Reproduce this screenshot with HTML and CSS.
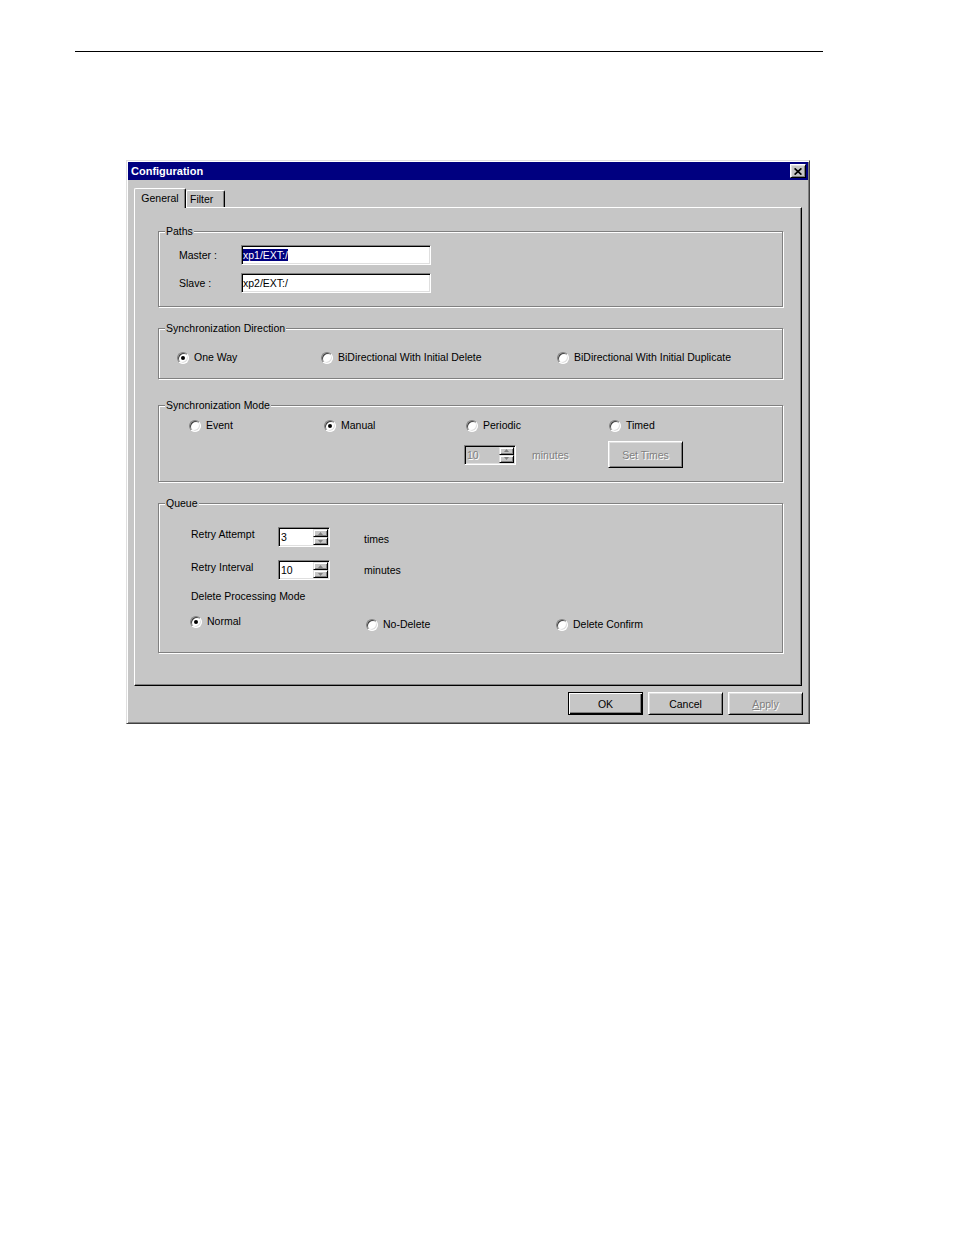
FILE: index.html
```html
<!DOCTYPE html>
<html>
<head>
<meta charset="utf-8">
<title>Configuration</title>
<link rel="stylesheet" href="styles.css">
</head>
<body>
<div class="page">
  <div class="rule"></div>
  <div class="dialog">
    <div class="titlebar">
      <span class="title">Configuration</span>
      <span class="close"><svg width="8" height="7" viewBox="0 0 8 7"><path d="M0.6 0.4 L7.4 6.6 M7.4 0.4 L0.6 6.6" stroke="#000" stroke-width="1.7" fill="none"/></svg></span>
    </div>
    <div class="tabs">
      <div class="tab tab-active">General</div>
      <div class="tab tab-filter">Filter</div>
    </div>
    <div class="panel">
      <div class="group group-paths">
        <span class="group-title">Paths</span>
        <div class="paths-grid">
          <span>Master :</span>
          <div class="field"><span class="sel">xp1/EXT:/</span></div>
          <span>Slave :</span>
          <div class="field">xp2/EXT:/</div>
        </div>
      </div>

      <div class="group group-dir">
        <span class="group-title">Synchronization Direction</span>
        <div class="dir-row">
          <div class="opt"><span class="radio on"></span><span>One Way</span></div>
          <div class="opt"><span class="radio"></span><span>BiDirectional With Initial Delete</span></div>
          <div class="opt"><span class="radio"></span><span>BiDirectional With Initial Duplicate</span></div>
        </div>
      </div>

      <div class="group group-mode">
        <span class="group-title">Synchronization Mode</span>
        <div class="mode-row">
          <div class="opt"><span class="radio"></span><span>Event</span></div>
          <div class="opt"><span class="radio on"></span><span>Manual</span></div>
          <div class="opt"><span class="radio"></span><span>Periodic</span></div>
          <div class="opt"><span class="radio"></span><span>Timed</span></div>
        </div>
        <div class="mode-row2">
          <div class="spin spin-disabled">
            <span class="spin-val">10</span>
            <span class="spin-btns">
              <span class="spin-btn"><svg width="5" height="3" viewBox="0 0 5 3"><path d="M2.5 0 L5 3 L0 3 Z" fill="#808080"/></svg></span>
              <span class="spin-btn"><svg width="5" height="3" viewBox="0 0 5 3"><path d="M0 0 L5 0 L2.5 3 Z" fill="#808080"/></svg></span>
            </span>
          </div>
          <span class="unit-dim dim">minutes</span>
          <div class="btn btn-settimes dim">Set Times</div>
        </div>
      </div>

      <div class="group group-queue">
        <span class="group-title">Queue</span>
        <div class="q-row">
          <span class="q-label">Retry Attempt</span>
          <div class="spin">
            <span class="spin-val">3</span>
            <span class="spin-btns">
              <span class="spin-btn"><svg width="5" height="3" viewBox="0 0 5 3"><path d="M2.5 0 L5 3 L0 3 Z" fill="#808080"/></svg></span>
              <span class="spin-btn"><svg width="5" height="3" viewBox="0 0 5 3"><path d="M0 0 L5 0 L2.5 3 Z" fill="#808080"/></svg></span>
            </span>
          </div>
          <span class="q-unit q-unit-times">times</span>
        </div>
        <div class="q-row">
          <span class="q-label">Retry Interval</span>
          <div class="spin">
            <span class="spin-val">10</span>
            <span class="spin-btns">
              <span class="spin-btn"><svg width="5" height="3" viewBox="0 0 5 3"><path d="M2.5 0 L5 3 L0 3 Z" fill="#808080"/></svg></span>
              <span class="spin-btn"><svg width="5" height="3" viewBox="0 0 5 3"><path d="M0 0 L5 0 L2.5 3 Z" fill="#808080"/></svg></span>
            </span>
          </div>
          <span class="q-unit q-unit-min">minutes</span>
        </div>
        <div class="q-heading">Delete Processing Mode</div>
        <div class="del-row">
          <div class="opt"><span class="radio on"></span><span>Normal</span></div>
          <div class="opt opt-low"><span class="radio"></span><span>No-Delete</span></div>
          <div class="opt opt-low"><span class="radio"></span><span>Delete Confirm</span></div>
        </div>
      </div>
    </div>
    <div class="buttons">
      <div class="btn btn-default">OK</div>
      <div class="btn">Cancel</div>
      <div class="btn dim"><span><u>A</u>pply</span></div>
    </div>
  </div>
</div>
</body>
</html>
```

FILE: styles.css
```css
* {
  box-sizing: border-box;
}

body {
  margin: 0;
  background: #fff;
  font-family: "Liberation Sans", Arial, sans-serif;
  font-size: 10.5px;
  color: #000;
}

.page {
  width: 954px;
  height: 1235px;
  padding-top: 51px;
}

.rule {
  margin-left: 75px;
  width: 748px;
  height: 1px;
  background: #000;
}

.dialog {
  margin-top: 108px;
  margin-left: 126px;
  width: 684px;
  height: 564px;
  background: #c6c6c6;
  border: 1px solid;
  border-color: #dfdfdf #404040 #404040 #dfdfdf;
  box-shadow: inset 1px 1px 0 #fff, inset -1px -1px 0 #808080;
  padding: 1px;
  display: flex;
  flex-direction: column;
}

.titlebar {
  height: 18px;
  background: #000080;
  color: #fff;
  display: flex;
  align-items: center;
  justify-content: space-between;
  padding: 0 2px 0 3px;
}

.title {
  font-weight: bold;
  font-size: 11px;
}

.close {
  width: 16px;
  height: 14px;
  background: #c6c6c6;
  border: 1px solid;
  border-color: #fff #000 #000 #fff;
  box-shadow: inset 1px 1px 0 #dfdfdf, inset -1px -1px 0 #808080;
  display: flex;
  align-items: center;
  justify-content: center;
}

.tabs {
  display: flex;
  align-items: flex-end;
  height: 19px;
  margin-top: 8px;
  padding-left: 6px;
}

.tab {
  height: 17px;
  border-top: 1px solid #fff;
  border-left: 1px solid #fff;
  border-right: 1px solid #000;
  box-shadow: inset -1px 0 0 #808080;
  border-radius: 2px 2px 0 0;
  line-height: 17px;
}

.tab-active {
  width: 52px;
  height: 20px;
  margin-bottom: -1px;
  position: relative;
  z-index: 1;
  background: #c6c6c6;
  text-align: center;
  line-height: 18px;
}

.tab-filter {
  width: 39px;
  padding-left: 3px;
}

.panel {
  margin-left: 6px;
  width: 668px;
  height: 479px;
  border: 1px solid;
  border-color: #fff #000 #000 #fff;
  box-shadow: inset -1px -1px 0 #808080;
}

.group {
  position: relative;
  width: 625px;
  margin-left: 23px;
  border: 1px solid #808080;
  box-shadow: 1px 1px 0 #fff, inset 1px 1px 0 #fff;
}

.group-title {
  position: absolute;
  top: -7px;
  left: 6px;
  padding: 0 1px;
  background: #c6c6c6;
  line-height: 12px;
  white-space: nowrap;
}

.group-paths {
  margin-top: 23px;
  height: 76px;
  padding: 13px 0 0 20px;
}

.paths-grid {
  display: grid;
  grid-template-columns: 62px 190px;
  grid-auto-rows: 20px;
  row-gap: 8px;
  align-items: center;
}

.field {
  width: 190px;
  height: 20px;
  background: #fff;
  border: 1px solid;
  border-color: #808080 #fff #fff #808080;
  box-shadow: inset 1px 1px 0 #000, inset -1px -1px 0 #dfdfdf;
  padding: 1px;
  line-height: 16px;
  white-space: nowrap;
}

.sel {
  background: #000080;
  color: #fff;
}

.group-dir {
  margin-top: 21px;
  height: 51px;
  padding: 22px 0 0 18px;
}

.dir-row {
  display: grid;
  grid-template-columns: 144px 236px auto;
}

.opt {
  display: flex;
  align-items: center;
  gap: 5px;
  line-height: 13px;
  white-space: nowrap;
}

.radio {
  width: 12px;
  height: 12px;
  flex: none;
  border-radius: 50%;
  border: 1px solid;
  border-color: #808080 #fff #fff #808080;
  background: #fff;
  box-shadow: inset 1px 1px 0 #404040, inset -1px -1px 0 #dfdfdf;
  display: flex;
  align-items: center;
  justify-content: center;
}

.radio.on::after {
  content: "";
  width: 4px;
  height: 4px;
  border-radius: 50%;
  background: #000;
}

.group-mode {
  margin-top: 26px;
  height: 77px;
  padding: 13px 0 0 30px;
}

.mode-row {
  display: grid;
  grid-template-columns: 135px 142px 143px auto;
}

.mode-row2 {
  display: flex;
  align-items: center;
  height: 27px;
  margin-top: 9px;
  padding-left: 275px;
}

.unit-dim {
  margin-left: 16px;
  width: 76px;
}

.dim {
  color: #808080;
  text-shadow: 1px 1px 0 #fff;
}

.spin {
  width: 52px;
  height: 20px;
  flex: none;
  display: flex;
  background: #fff;
  border: 1px solid;
  border-color: #808080 #fff #fff #808080;
  box-shadow: inset 1px 1px 0 #000, inset -1px -1px 0 #dfdfdf;
  padding: 1px;
}

.spin-disabled {
  background: #c6c6c6;
  color: #808080;
  text-shadow: 1px 1px 0 #fff;
}

.spin-val {
  flex: 1;
  padding-left: 1px;
  line-height: 16px;
}

.spin-btns {
  width: 15px;
  display: flex;
  flex-direction: column;
}

.spin-btn {
  flex: 1;
  background: #c6c6c6;
  border: 1px solid;
  border-color: #dfdfdf #000 #000 #dfdfdf;
  box-shadow: inset 1px 1px 0 #fff, inset -1px -1px 0 #808080;
  display: flex;
  align-items: center;
  justify-content: center;
}

.spin-btn svg {
  display: block;
}

.group-queue {
  margin-top: 21px;
  height: 150px;
  padding: 23px 0 0 32px;
}

.q-row {
  display: flex;
  align-items: flex-start;
}

.q-row + .q-row {
  margin-top: 13px;
}

.q-label {
  width: 87px;
  margin-top: 1px;
  line-height: 13px;
}

.q-unit {
  margin-left: 34px;
  line-height: 13px;
}

.q-unit-times {
  margin-top: 6px;
}

.q-unit-min {
  margin-top: 4px;
}

.q-heading {
  margin-top: 10px;
  line-height: 13px;
}

.del-row {
  display: grid;
  grid-template-columns: 176px 190px auto;
  align-items: start;
  margin-top: 12px;
  margin-left: -1px;
}

.opt-low {
  margin-top: 3px;
}

.buttons {
  display: flex;
  justify-content: flex-end;
  gap: 5px;
  margin-top: 6px;
  padding-right: 5px;
}

.btn {
  width: 75px;
  height: 23px;
  border: 1px solid;
  border-color: #fff #000 #000 #fff;
  box-shadow: inset 1px 1px 0 #dfdfdf, inset -1px -1px 0 #808080;
  display: flex;
  align-items: center;
  justify-content: center;
  white-space: nowrap;
}

.btn-default {
  border-color: #000;
  box-shadow: inset 1px 1px 0 #fff, inset -1px -1px 0 #000, inset -2px -2px 0 #808080;
}

.btn-settimes {
  height: 27px;
  flex: none;
}
```
